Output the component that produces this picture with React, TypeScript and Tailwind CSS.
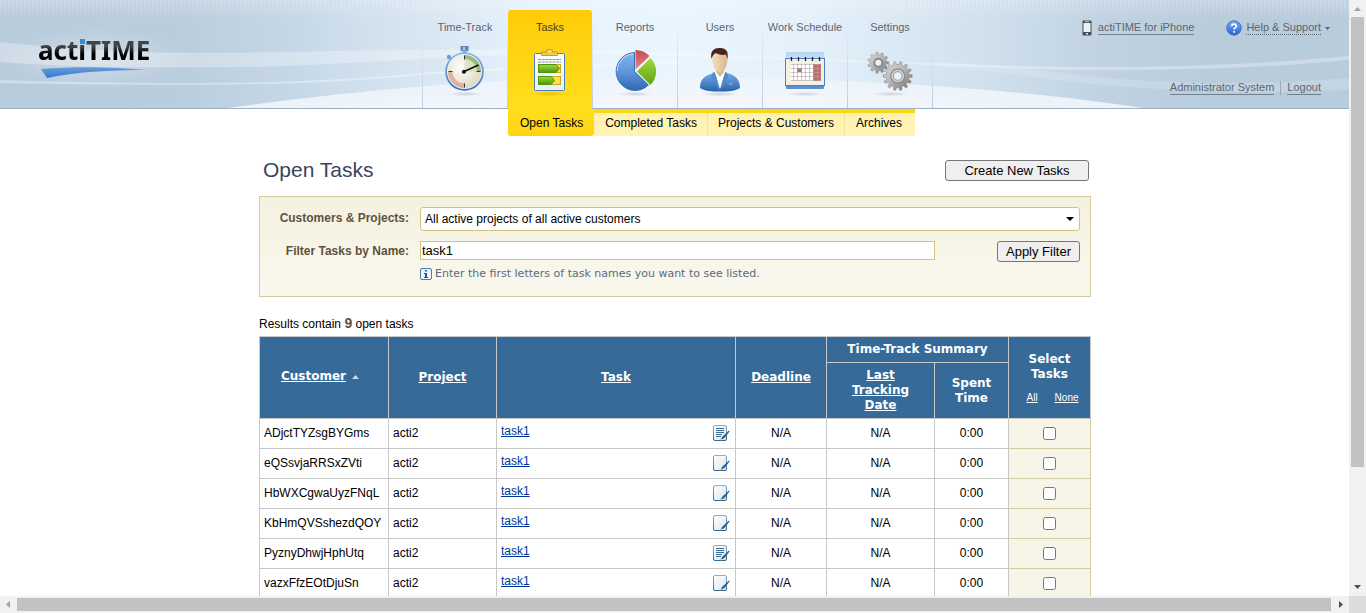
import React, { useState } from "react";

function gear(cx: number, cy: number, outer: number, inner: number, teeth: number) {
  const pts: string[] = [];
  const step = (Math.PI * 2) / teeth;
  for (let i = 0; i < teeth; i++) {
    const a = i * step;
    const corners: [number, number][] = [
      [-0.3, inner],
      [-0.18, outer],
      [0.18, outer],
      [0.3, inner],
    ];
    corners.forEach(([k, r]) => {
      pts.push(`${(cx + Math.cos(a + k * step) * r).toFixed(2)},${(cy + Math.sin(a + k * step) * r).toFixed(2)}`);
    });
  }
  return pts.join(" ");
}

function IconFrame({ children, shadow = "#7f8da0" }: { children: React.ReactNode; shadow?: string }) {
  return (
    <svg viewBox="0 0 48 52" width="48" height="52" aria-hidden="true">
      <defs>
        <radialGradient id={`sh${shadow.slice(1)}`}>
          <stop offset="0" stopColor={shadow} stopOpacity="0.35" />
          <stop offset="1" stopColor={shadow} stopOpacity="0" />
        </radialGradient>
      </defs>
      <ellipse cx="24" cy="49" rx="18" ry="2.2" fill={`url(#sh${shadow.slice(1)})`} />
      {children}
    </svg>
  );
}

function StopwatchIcon() {
  return (
    <IconFrame>
      <defs>
        <linearGradient id="swRing" x1="0" y1="0" x2="0" y2="1">
          <stop offset="0" stopColor="#8db8e6" />
          <stop offset="1" stopColor="#3c70b8" />
        </linearGradient>
        <radialGradient id="swFace" cx="0.4" cy="0.35" r="0.7">
          <stop offset="0" stopColor="#ffffff" />
          <stop offset="1" stopColor="#dcd9bf" />
        </radialGradient>
      </defs>
      <rect x="19.500" y="1" width="8" height="5" rx="0.5" fill="#5b86bd" />
      <rect x="22" y="2" width="2" height="3" fill="#a8c8ec" />
      <rect x="21.5" y="5" width="4" height="3" fill="#7da5d6" />
      <circle cx="8" cy="12" r="2.2" fill="#6f9fd8" />
      <circle cx="23.5" cy="26.5" r="19.3" fill="url(#swRing)" />
      <circle cx="23.5" cy="26.5" r="17.6" fill="#e6f0fa" />
      <circle cx="23.5" cy="26.5" r="16.6" fill="url(#swFace)" />
      <path d="M23.5 9.9A16.6 16.6 0 0 1 40.1 26.5H36A12.5 12.5 0 0 0 23.5 14Z" fill="#7fae5a" opacity="0.75" />
      <path d="M23.5 14A12.5 12.5 0 0 1 36 26.5H23.5Z" fill="#c9d3a4" opacity="0.5" />
      <path d="M6.9 26.5A16.6 16.6 0 0 0 23.5 43.1V38.5A12 12 0 0 1 11.5 26.5Z" fill="#dc9c8c" opacity="0.7" />
      <path d="M23.5 10.5v4M23.5 38.5v4M7.5 26.5h4M35.5 26.5h4" stroke="#333" strokeWidth="1" />
      <path d="M21 27.5 37.5 20" stroke="#111" strokeWidth="1.5" />
      <circle cx="23" cy="26.7" r="2" fill="#111" />
    </IconFrame>
  );
}

function ClipboardIcon() {
  return (
    <IconFrame shadow="#b08a00">
      <defs>
        <linearGradient id="cbGreen" x1="0" y1="0" x2="0" y2="1">
          <stop offset="0" stopColor="#a4d545" />
          <stop offset="0.5" stopColor="#74bb1c" />
          <stop offset="1" stopColor="#4b9a0c" />
        </linearGradient>
        <linearGradient id="cbPaper" x1="0" y1="0" x2="0" y2="1">
          <stop offset="0" stopColor="#ffffff" />
          <stop offset="1" stopColor="#e8f0fa" />
        </linearGradient>
      </defs>
      <rect x="8.5" y="8.5" width="30" height="37" rx="1" fill="url(#cbPaper)" stroke="#4f83bf" />
      <path d="M15.500 10.500V7H20.500V5.500a1 1 0 0 1 1-1h4a1 1 0 0 1 1 1V7H31.500v3.500z" fill="#edcb45" stroke="#c09a1a" strokeWidth="0.9" />
      <circle cx="23.500" cy="6.500" r="1.100" fill="#fff3b5" />
      <path d="M12 14.500h23M12 17h23" stroke="#7b7f86" strokeWidth="0.8" strokeDasharray="3 0.600" />
      <rect x="12.500" y="19.500" width="22" height="8" fill="#ffe04a" stroke="#caa81c" />
      <rect x="12.500" y="31.500" width="22" height="8" fill="#ffe04a" stroke="#caa81c" />
      <path d="M12.500 19.500H30L33.500 23.500 30 27.500H12.500Z" fill="url(#cbGreen)" stroke="#4c9310" />
      <path d="M12.500 31.500H25L28.500 35.500 25 39.500H12.500Z" fill="url(#cbGreen)" stroke="#4c9310" />
    </IconFrame>
  );
}

function PieIcon() {
  return (
    <IconFrame>
      <defs>
        <linearGradient id="pieBlue" x1="0" y1="0" x2="0" y2="1">
          <stop offset="0" stopColor="#86b7ee" />
          <stop offset="0.55" stopColor="#5b93d8" />
          <stop offset="1" stopColor="#2f67b3" />
        </linearGradient>
        <linearGradient id="pieGreen" x1="0" y1="0" x2="0" y2="1">
          <stop offset="0" stopColor="#a3d63b" />
          <stop offset="1" stopColor="#5da514" />
        </linearGradient>
        <linearGradient id="pieRed" x1="0" y1="0" x2="0" y2="1">
          <stop offset="0" stopColor="#c8494f" />
          <stop offset="1" stopColor="#e0868a" />
        </linearGradient>
      </defs>
      <path d="M23.500 26.500V7.500A19 19 0 1 0 37.500 40Z" fill="url(#pieBlue)" stroke="#3a71bb" />
      <path d="M22 9A17.500 17.500 0 0 0 6 26" fill="none" stroke="#c4dcf7" strokeWidth="1" />
      <path d="M24.500 24.500V5A20 20 0 0 1 38.500 11Z" fill="url(#pieRed)" />
      <path d="M26 26.500 39.500 13A19 19 0 0 1 39.500 40Z" fill="url(#pieGreen)" />
    </IconFrame>
  );
}

function UserIcon() {
  return (
    <IconFrame>
      <defs>
        <linearGradient id="usSuit" x1="0" y1="0" x2="0" y2="1">
          <stop offset="0" stopColor="#79b0ea" />
          <stop offset="1" stopColor="#2a63ad" />
        </linearGradient>
        <linearGradient id="usSkin" x1="0" y1="0" x2="1" y2="0">
          <stop offset="0" stopColor="#f6dfc0" />
          <stop offset="1" stopColor="#d9b48a" />
        </linearGradient>
      </defs>
      <path d="M4 43c0-8 4-12 11-14l4-2h10l5 2c6 2 10 6 10 14-4 3-12 3.500-20 3.500S8 46 4 43z" fill="url(#usSuit)" />
      <path d="M18.500 27 24 44l5.500-17-2-3h-7z" fill="#ffffff" />
      <path d="M20 23h8v4l-4 5-4-5z" fill="#dbb78f" />
      <path d="M18 26.500 15 31l8.500 14.500L20.500 32zM29.500 26.500l3 4.500L24 45.500 27.500 32z" fill="#4f8bd0" />
      <path d="M16 13c0-6 3-8 8-8s7.500 2 7.500 8c0 8-3 14-7.500 14S16 21 16 13z" fill="url(#usSkin)" />
      <path d="M15.500 14C14 7 17 3 23 3c6 0 10 2 8.500 11l-1.500-4.500c-4 1-8 0-10-1.500-2 1-3.500 2.500-4.500 6z" fill="#4a2622" />
      <path d="M32 40l3-4 2 4z" fill="#6ea3e0" />
    </IconFrame>
  );
}

function CalendarIcon() {
  return (
    <IconFrame>
      <defs>
        <linearGradient id="caTop" x1="0" y1="0" x2="0" y2="1">
          <stop offset="0" stopColor="#b7d3ef" />
          <stop offset="1" stopColor="#d6e7f8" />
        </linearGradient>
      </defs>
      <rect x="5" y="7" width="38" height="10" rx="1" fill="url(#caTop)" />
      <rect x="5" y="38" width="38" height="6" rx="1" fill="#5c8fcc" />
      <rect x="4.500" y="13.500" width="39" height="27" fill="#f4f1e4" stroke="#4d80bf" />
      <rect x="10" y="19" width="30" height="17" fill="#ffffff" />
      <rect x="32" y="19" width="8" height="17" fill="#c9686a" />
      <rect x="16" y="23" width="5" height="4" fill="#c8686a" />
      <path d="M10 19.500h30M10 23.500h30M10 27.500h30M10 31.500h30M10 35.500h30M12.500 19v17M16.500 19v17M20.500 19v17M24.500 19v17M28.500 19v17M32.500 19v17M36.500 19v17" stroke="#a9a5a2" strokeWidth="0.6" />
      <path d="M10.500 12v4M17.500 12v4M24.500 12v4M31.500 12v4M38.500 12v4" stroke="#1d1d1d" strokeWidth="1.300" />
    </IconFrame>
  );
}

function GearsIcon() {
  return (
    <IconFrame>
      <defs>
        <linearGradient id="geMetal" x1="0" y1="0" x2="1" y2="1">
          <stop offset="0" stopColor="#dedede" />
          <stop offset="0.5" stopColor="#b4b4b4" />
          <stop offset="1" stopColor="#707070" />
        </linearGradient>
      </defs>
      <polygon points={gear(12.3, 17.7, 10.5, 8, 11)} fill="url(#geMetal)" stroke="#858585" strokeWidth="0.5" />
      <circle cx="12.300" cy="17.700" r="5" fill="#8b8b8b" />
      <circle cx="12.300" cy="17.700" r="3" fill="#e9f1f9" />
      <polygon points={gear(31.7, 31, 14.5, 11.5, 14)} fill="url(#geMetal)" stroke="#7a7a7a" strokeWidth="0.5" />
      <circle cx="31.700" cy="31" r="7.500" fill="#828282" />
      <circle cx="31.700" cy="31" r="6.500" fill="#cfcfcf" />
      <circle cx="31.700" cy="31" r="4.300" fill="#eaf1f9" stroke="#8b8b8b" strokeWidth="0.8" />
    </IconFrame>
  );
}

function HeaderBackdrop() {
  return (
    <svg className="absolute inset-0 h-full w-full" viewBox="0 0 1349 109" preserveAspectRatio="none" aria-hidden="true">
      <defs>
        <linearGradient id="hdBase" x1="0" y1="0" x2="1" y2="0">
          <stop offset="0" stopColor="#b9ccdc" />
          <stop offset="0.13" stopColor="#bacddd" />
          <stop offset="0.22" stopColor="#c6d8e7" />
          <stop offset="0.31" stopColor="#d8e6f2" />
          <stop offset="0.4" stopColor="#e6f2fc" />
          <stop offset="0.5" stopColor="#e9f5ff" />
          <stop offset="0.6" stopColor="#e4f1fb" />
          <stop offset="0.7" stopColor="#d5e4f0" />
          <stop offset="0.82" stopColor="#c0d2e2" />
          <stop offset="0.9" stopColor="#b9ccdc" />
          <stop offset="1" stopColor="#b9ccdc" />
        </linearGradient>
        <linearGradient id="hdFade" x1="0" y1="0" x2="0" y2="1">
          <stop offset="0" stopColor="#fff" />
          <stop offset="1" stopColor="#000" />
        </linearGradient>
        <linearGradient id="hdHill" x1="0" y1="0" x2="0" y2="1">
          <stop offset="0" stopColor="#eef4fb" />
          <stop offset="1" stopColor="#f6f8fd" />
        </linearGradient>
        <radialGradient id="hdGlow">
          <stop offset="0" stopColor="#fff" stopOpacity="0.28" />
          <stop offset="1" stopColor="#fff" stopOpacity="0" />
        </radialGradient>
        <pattern id="hdStripes" width="4" height="20" patternUnits="userSpaceOnUse">
          <rect width="2" height="20" fill="#fff" opacity="0.14" />
        </pattern>
        <mask id="hdMask">
          <rect width="1349" height="20" fill="url(#hdFade)" />
        </mask>
      </defs>
      <rect width="1349" height="109" fill="url(#hdBase)" />
      <rect width="1349" height="20" fill="#fff" opacity="0.14" mask="url(#hdMask)" />
      <rect width="1349" height="20" fill="url(#hdStripes)" mask="url(#hdMask)" />
      <path d="M0 42C70 50 140 53 215 53C300 52 360 50 420 50C600 46 760 58 935 63C1080 70 1220 68 1349 56V60C1220 72 1080 73 935 65C780 60 600 48 420 59C330 64 280 67 233 67C130 68 70 67 0 62Z" fill="#fff" opacity="0.3" />
      <path d="M0 80C90 83 200 84 270 82C340 80 380 77 420 73C520 66 600 64 680 62V64C600 66 520 69 420 75C380 79 340 82 270 84C200 85 90 85 0 83Z" fill="#fff" opacity="0.35" />
      <path d="M935 62C980 64 1010 66 1040 70C1120 82 1230 88 1349 78V90C1230 96 1120 88 1040 78C1000 72 960 68 935 66Z" fill="#fff" opacity="0.16" />
      <path d="M228 108C330 94 470 78 640 77C820 76 1020 88 1142 108Z" fill="url(#hdHill)" opacity="0.85" />
      <ellipse cx="95" cy="58" rx="95" ry="32" fill="url(#hdGlow)" />
      <rect y="108" width="1349" height="1" fill="#9db2c8" />
    </svg>
  );
}

const TABS = [
  { label: "Time-Track", Icon: StopwatchIcon },
  { label: "Tasks", Icon: ClipboardIcon, active: true },
  { label: "Reports", Icon: PieIcon },
  { label: "Users", Icon: UserIcon },
  { label: "Work Schedule", Icon: CalendarIcon },
  { label: "Settings", Icon: GearsIcon },
];

function Separator() {
  return <div className="h-[108px] w-px shrink-0 bg-linear-to-b from-transparent from-20% via-[#d9e2f0] to-[#c3cce2]" />;
}

function Header() {
  return (
    <header className="relative h-[109px] text-[11px] text-[#5b6670]">
      <HeaderBackdrop />
      <div className="relative grid h-full grid-cols-[1fr_auto_1fr]">
        <div className="pt-8 pl-[38px]">
          <a href="#home" className="relative inline-block bg-linear-to-b from-[#444] from-40% to-black to-70% bg-clip-text font-['Noto_Sans'] text-[26px] leading-9 font-bold text-transparent">
            actiTIME
            <span className="absolute top-[7px] left-[42px] h-[5px] w-[5px] bg-[#2f8fd0]" />
          </a>
          <svg className="-mt-[2px] ml-[2px] block" width="108" height="12" viewBox="0 0 108 12" aria-hidden="true">
            <defs>
              <linearGradient id="swoosh" x1="0" y1="0" x2="0" y2="1">
                <stop offset="0" stopColor="#6c9bd8" />
                <stop offset="1" stopColor="#2f7bd6" />
              </linearGradient>
            </defs>
            <path d="M1 3C35 0 75 1 107 4C70 4 35 6 7 12Z" fill="url(#swoosh)" />
          </svg>
        </div>
        <nav className="flex pl-[6px]" aria-label="Main">
          <Separator />
          {TABS.map(({ label, Icon, active }) => (
            <React.Fragment key={label}>
              <a
                href={`#${label}`}
                className={
                  active
                    ? "mt-[10px] flex w-[84px] flex-col items-center rounded-t-[3px] bg-linear-to-b from-[#ffcb08] to-[#ffdf1c] pt-[9px] text-[#4a3f1c]"
                    : "flex w-[84px] flex-col items-center pt-[19px]"
                }
              >
                <span className="leading-4 whitespace-nowrap">{label}</span>
                <span className="mt-[10px]">
                  <Icon />
                </span>
              </a>
              <Separator />
            </React.Fragment>
          ))}
        </nav>
        <div className="flex flex-col items-end pt-5">
          <div className="flex h-4 items-center pr-[19px]">
            <svg width="10" height="16" viewBox="0 0 10 16" aria-hidden="true">
              <rect x="0.500" y="0.500" width="9" height="15" rx="1" fill="#4a4d50" />
              <rect x="1.500" y="3" width="7" height="9" fill="#eef1f4" />
              <rect x="3" y="1.200" width="4" height="0.900" fill="#cfd3d6" />
              <rect x="4" y="13" width="2" height="1.500" fill="#e4e7ea" />
            </svg>
            <a href="#iphone" className="mr-8 ml-[6px] border-b border-[#74818d] leading-[13px]">
              actiTIME for iPhone
            </a>
            <svg width="16" height="16" viewBox="0 0 16 16" aria-hidden="true">
              <defs>
                <linearGradient id="helpBall" x1="0" y1="0" x2="0" y2="1">
                  <stop offset="0" stopColor="#7db0f5" />
                  <stop offset="1" stopColor="#2561d6" />
                </linearGradient>
              </defs>
              <circle cx="8" cy="8" r="7.200" fill="url(#helpBall)" stroke="#3f6fc4" />
              <path d="M5.700 6.300C5.700 3.300 10.300 3.400 10.300 6.100C10.300 7.700 8.100 7.700 8.100 9.500M8.100 11v1.700" fill="none" stroke="#fff" strokeWidth="1.700" />
            </svg>
            <a href="#help" className="ml-1 border-b border-dotted border-[#5b6670] leading-[13px]">
              Help &amp; Support
            </a>
            <svg className="ml-1" width="5" height="3" viewBox="0 0 5 3" aria-hidden="true">
              <path d="M0 0h5L2.500 3z" fill="#5b6670" />
            </svg>
          </div>
          <div className="mt-[45px] flex items-center pr-7">
            <a href="#account" className="border-b border-[#74818d] leading-[13px]">
              Administrator System
            </a>
            <span className="mx-[6px] h-[14px] w-px bg-[#a3a9b0]" />
            <a href="#logout" className="border-b border-[#74818d] leading-[13px]">
              Logout
            </a>
          </div>
        </div>
      </div>
    </header>
  );
}

function SubNav() {
  return (
    <div className="flex justify-center pl-[6px]">
      <nav className="flex h-[27px] w-[511px] pl-[86px] text-[12px] whitespace-nowrap text-black" aria-label="Tasks">
        <a href="#open" className="rounded-b-[3px] bg-linear-to-b from-[#ffdf1c] to-[#ffd412] pt-1 pr-[11px] pl-3 leading-5">
          Open Tasks
        </a>
        <div className="flex rounded-br-[3px] border-t-4 border-[#fcd616] bg-[#fff2b3] leading-5">
          <a href="#completed" className="pr-[10px] pl-[11px]">
            Completed Tasks
          </a>
          <a href="#projects" className="border-l border-[#f5e49a] px-[10px]">
            Projects &amp; Customers
          </a>
          <a href="#archives" className="border-l border-[#f5e49a] pr-[13px] pl-[11px]">
            Archives
          </a>
        </div>
      </nav>
    </div>
  );
}

function Filters() {
  return (
    <form
      onSubmit={(e) => e.preventDefault()}
      className="mt-[14px] grid h-[101px] grid-cols-[149px_1fr_auto] content-start gap-x-[11px] border border-[#d4cba0] bg-linear-to-b from-[#f5f1e1] to-[#faf8ee] pt-[10px] pr-[10px] text-[12px]"
    >
      <label htmlFor="scope" className="text-right leading-[22px] font-bold text-[#5f523c]">
        Customers &amp; Projects:
      </label>
      <div className="relative col-span-2">
        <select id="scope" className="block h-6 w-full appearance-none rounded-[3px] border border-[#cfc483] bg-white pl-1 text-[12px] text-black">
          <option>All active projects of all active customers</option>
        </select>
        <svg className="pointer-events-none absolute top-[10px] right-[6px]" width="8" height="4" viewBox="0 0 8 4" aria-hidden="true">
          <path d="M0 0h8L4 4z" fill="#000" />
        </svg>
      </div>
      <label htmlFor="name" className="mt-[10px] text-right leading-5 font-bold text-[#5f523c]">
        Filter Tasks by Name:
      </label>
      <input id="name" defaultValue="task1" className="mt-[10px] h-[19px] border border-[#cfc483] bg-white px-px text-[13px] text-black" />
      <button type="submit" className="mt-[10px] ml-[51px] h-[21px] w-[83px] rounded-[3px] border border-[#767676] bg-[#efefef] text-[13px] leading-[19px] text-black">
        Apply Filter
      </button>
      <p className="col-span-2 col-start-2 mt-[5px] flex items-center gap-[3px] font-['DejaVu_Sans'] text-[11px] leading-[14px] text-[#5a6a7c]">
        <svg width="12" height="12" viewBox="0 0 12 12" aria-hidden="true">
          <rect x="0.500" y="0.500" width="11" height="11" rx="1.500" fill="#eef6fd" stroke="#4d7ea8" />
          <path d="M5 2h2v1.500H5zM4 5h3v4h1.200v1H4V9h1V6H4z" fill="#1f5c92" />
        </svg>
        Enter the first letters of task names you want to see listed.
      </p>
    </form>
  );
}

const ROWS = [
  { customer: "ADjctTYZsgBYGms", note: true },
  { customer: "eQSsvjaRRSxZVti", note: false },
  { customer: "HbWXCgwaUyzFNqL", note: false },
  { customer: "KbHmQVSshezdQOY", note: false },
  { customer: "PyznyDhwjHphUtq", note: true },
  { customer: "vazxFfzEOtDjuSn", note: false },
];

function NoteIcon({ filled }: { filled: boolean }) {
  return (
    <svg width="17" height="17" viewBox="0 0 17 17" aria-hidden="true">
      <defs>
        <linearGradient id="notePaper" x1="0" y1="0" x2="1" y2="1">
          <stop offset="0" stopColor="#ffffff" />
          <stop offset="1" stopColor="#d8e6f1" />
        </linearGradient>
        <linearGradient id="noteEdge" x1="0" y1="0" x2="0" y2="1">
          <stop offset="0" stopColor="#8aafc9" />
          <stop offset="1" stopColor="#34658f" />
        </linearGradient>
      </defs>
      <rect x="0.500" y="0.500" width="13" height="15" rx="1.500" fill="url(#notePaper)" stroke="url(#noteEdge)" />
      {filled && <path d="M3 3.500h8M3 5.500h8M3 7.500h8M3 9.500h6M3 11.500h5" stroke="#3e6d94" />}
      <path d="M7.500 15 9 12l7-6.500.700.800L11.500 13z" fill="#2b5f8c" />
      <path d="M7 15.500 8 13l1.800 1.500z" fill="#f0c419" />
    </svg>
  );
}

function TaskTable() {
  const [checked, setChecked] = useState<boolean[]>(ROWS.map(() => false));
  const th = "border border-[#c8c8c8] bg-[#366a99] p-0 text-center align-middle font-bold";
  const td = "h-[30px] border border-[#c8c8c8] pt-0 pb-[2px]";
  return (
    <table className="mt-[3px] w-full table-fixed border-collapse text-[12px] text-black">
      <colgroup>
        <col className="w-[129px]" />
        <col className="w-[108px]" />
        <col />
        <col className="w-[91px]" />
        <col className="w-[108px]" />
        <col className="w-[74px]" />
        <col className="w-[82px]" />
      </colgroup>
      <thead className="font-['DejaVu_Sans'] leading-[15px] text-white">
        <tr className="h-[26px]">
          <th rowSpan={2} className={th}>
            <a href="#customer" className="inline-flex items-center gap-[6px] pr-2 pb-[2px]">
              <span className="underline">Customer</span>
              <svg width="7" height="4" viewBox="0 0 7 4" aria-hidden="true">
                <path d="M3.500 0 7 4H0z" fill="#c9d8e6" />
              </svg>
            </a>
          </th>
          <th rowSpan={2} className={th}>
            <a href="#project" className="underline">Project</a>
          </th>
          <th rowSpan={2} className={th}>
            <a href="#task" className="underline">Task</a>
          </th>
          <th rowSpan={2} className={th}>
            <a href="#deadline" className="underline">Deadline</a>
          </th>
          <th colSpan={2} className={th}>Time-Track Summary</th>
          <th rowSpan={2} className={th}>
            <div className="pt-[2px]">
              Select
              <br />
              Tasks
            </div>
            <div className="mt-2 flex justify-center gap-[17px] pl-[6px] font-['Liberation_Sans'] text-[10px] font-normal">
              <button type="button" className="underline" onClick={() => setChecked(ROWS.map(() => true))}>All</button>
              <button type="button" className="underline" onClick={() => setChecked(ROWS.map(() => false))}>None</button>
            </div>
          </th>
        </tr>
        <tr className="h-[56px]">
          <th className={th}>
            <a href="#tracked" className="underline">
              Last
              <br />
              Tracking
              <br />
              Date
            </a>
          </th>
          <th className={th}>
            Spent
            <br />
            Time
          </th>
        </tr>
      </thead>
      <tbody>
        {ROWS.map((row, i) => (
          <tr key={row.customer}>
            <td className={`${td} pr-0 pl-1`}>{row.customer}</td>
            <td className={`${td} pr-0 pl-1`}>acti2</td>
            <td className="h-[30px] border border-[#c8c8c8] py-0 pr-[5px] pl-1">
              <div className="flex items-center justify-between">
                <a href="#task1" className="pb-[6px] text-[#003399] underline">task1</a>
                <button type="button" aria-label="Edit description">
                  <NoteIcon filled={row.note} />
                </button>
              </div>
            </td>
            <td className={`${td} px-0 text-center`}>N/A</td>
            <td className={`${td} px-0 text-center`}>N/A</td>
            <td className={`${td} px-0 text-center`}>0:00</td>
            <td className="border border-[#d4cba0] bg-[#f7f5e8] p-0">
              <input
                type="checkbox"
                aria-label={`Select ${row.customer}`}
                checked={checked[i]}
                onChange={() => setChecked(checked.map((c, j) => (j === i ? !c : c)))}
                className="mx-auto block h-[13px] w-[13px]"
              />
            </td>
          </tr>
        ))}
      </tbody>
    </table>
  );
}

function Arrow({ d, color }: { d: string; color: string }) {
  return (
    <svg className="shrink-0" width="17" height="17" viewBox="0 0 17 17" aria-hidden="true">
      <path d={d} fill={color} />
    </svg>
  );
}

export default function App() {
  return (
    <div className="grid h-screen grid-cols-[1fr_17px] grid-rows-[1fr_17px] bg-white font-['Liberation_Sans',Arial,sans-serif]">
      <div className="min-h-0 min-w-0 overflow-hidden">
        <Header />
        <SubNav />
        <main className="flex justify-center pl-px">
          <div className="w-[832px]">
            <div className="mt-6 flex items-start justify-between pr-[2px] pl-1">
              <h1 className="text-[21px] leading-5 text-[#3a4560]">Open Tasks</h1>
              <button type="button" className="h-[21px] w-[144px] rounded-[3px] border border-[#767676] bg-[#efefef] text-[13px] leading-[19px] text-black">
                Create New Tasks
              </button>
            </div>
            <div className="pt-px">
              <Filters />
            </div>
            <p className="mt-[17px] text-[12px] leading-[18px] text-black">
              Results contain <b className="text-[14px] text-[#5f523c]">9</b> open tasks
            </p>
            <TaskTable />
          </div>
        </main>
      </div>
      <div className="flex min-h-0 flex-col bg-[#f1f1f1]">
        <Arrow d="M5 11h7L8.500 7z" color="#a3a3a3" />
        <div className="flex-1">
          <div className="mx-[2px] h-4/5 bg-[#c1c1c1]" />
        </div>
        <Arrow d="M5 6h7L8.500 10z" color="#505050" />
      </div>
      <div className="flex min-w-0 bg-[#f1f1f1]">
        <Arrow d="M10 5v7L6 8.500z" color="#a3a3a3" />
        <div className="my-[2px] mr-px flex-1 bg-[#c1c1c1]" />
        <Arrow d="M7 5v7l4-3.500z" color="#505050" />
      </div>
      <div className="bg-[#dcdcdc]" />
    </div>
  );
}
